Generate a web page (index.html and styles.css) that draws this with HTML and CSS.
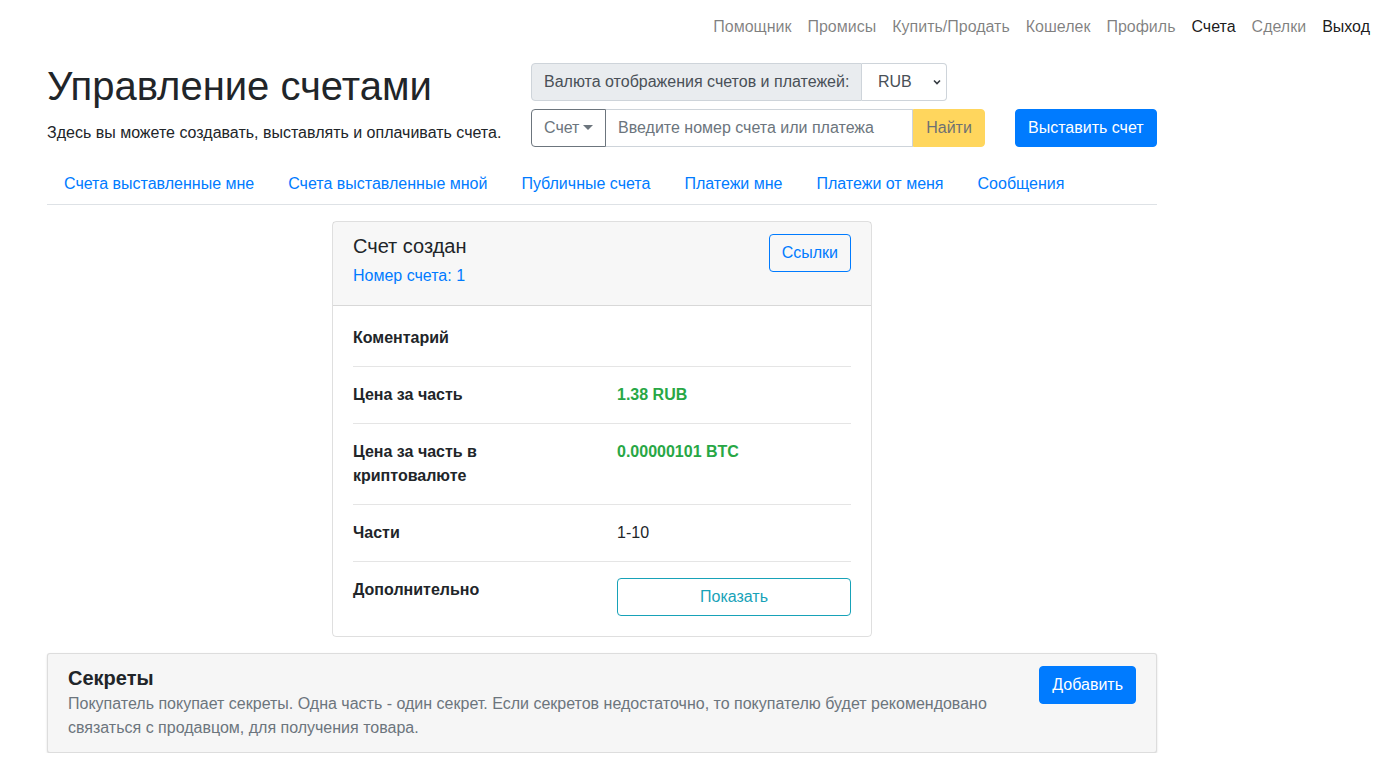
FILE: index.html
```html
<!DOCTYPE html>
<html lang="ru">
<head>
<meta charset="utf-8">
<title>Управление счетами</title>
<link rel="stylesheet" href="styles.css">
</head>
<body>
<nav class="topnav">
  <a class="nav-item" href="#">Помощник</a>
  <a class="nav-item" href="#">Промисы</a>
  <a class="nav-item" href="#">Купить/Продать</a>
  <a class="nav-item" href="#">Кошелек</a>
  <a class="nav-item" href="#">Профиль</a>
  <a class="nav-item active" href="#">Счета</a>
  <a class="nav-item" href="#">Сделки</a>
  <a class="nav-item active" href="#">Выход</a>
</nav>

<main class="container">
  <header class="page-head">
    <div class="head-left">
      <h1 class="title">Управление счетами</h1>
      <p class="lead">Здесь вы можете создавать, выставлять и оплачивать счета.</p>
    </div>
    <div class="head-right">
      <div class="input-group">
        <span class="ig-text">Валюта отображения счетов и платежей:</span>
        <div class="fake-select">
          <span>RUB</span>
          <svg class="chev" width="8" height="8" viewBox="0 0 8 8"><path d="M1 2.5 L4 5.5 L7 2.5" fill="none" stroke="#343a40" stroke-width="1.6"/></svg>
        </div>
      </div>
      <div class="search-row">
        <div class="input-group">
          <button class="btn btn-outline-secondary dd">Счет<span class="caret"></span></button>
          <input class="form-control" type="text" placeholder="Введите номер счета или платежа">
          <button class="btn btn-warning disabled">Найти</button>
        </div>
        <button class="btn btn-primary">Выставить счет</button>
      </div>
    </div>
  </header>

  <ul class="tabs">
    <li><a href="#">Счета выставленные мне</a></li>
    <li><a href="#">Счета выставленные мной</a></li>
    <li><a href="#">Публичные счета</a></li>
    <li><a href="#">Платежи мне</a></li>
    <li><a href="#">Платежи от меня</a></li>
    <li><a href="#">Сообщения</a></li>
  </ul>

  <section class="card">
    <div class="card-header">
      <div>
        <h5 class="card-title">Счет создан</h5>
        <a class="card-num" href="#">Номер счета: 1</a>
      </div>
      <button class="btn btn-outline-primary">Ссылки</button>
    </div>
    <div class="card-body">
      <div class="row"><div class="label">Коментарий</div><div class="value"></div></div>
      <hr>
      <div class="row"><div class="label">Цена за часть</div><div class="value green">1.38 RUB</div></div>
      <hr>
      <div class="row"><div class="label">Цена за часть в криптовалюте</div><div class="value green">0.00000101 BTC</div></div>
      <hr>
      <div class="row"><div class="label">Части</div><div class="value">1-10</div></div>
      <hr>
      <div class="row"><div class="label">Дополнительно</div><div class="value"><button class="btn btn-outline-info wide">Показать</button></div></div>
    </div>
  </section>

  <section class="secrets">
    <div class="secrets-text">
      <h5 class="secrets-title">Секреты</h5>
      <p class="muted">Покупатель покупает секреты. Одна часть - один секрет. Если секретов недостаточно, то покупателю будет рекомендовано связаться с продавцом, для получения товара.</p>
    </div>
    <button class="btn btn-primary">Добавить</button>
  </section>
</main>
</body>
</html>
```

FILE: styles.css
```css
* { box-sizing: border-box; }
html, body { margin: 0; padding: 0; }
body {
  font-family: "Liberation Sans", Arial, sans-serif;
  font-size: 16px;
  line-height: 1.5;
  color: #212529;
  background: #fff;
}
a { text-decoration: none; }

.topnav {
  display: flex;
  justify-content: flex-end;
  padding: 15px 11px 0 0;
  height: 52px;
}
.nav-item {
  padding: 0 8px;
  color: rgba(0,0,0,.5);
  line-height: 24px;
}
.nav-item.active { color: rgba(0,0,0,.9); }

.container {
  width: 1110px;
  margin-left: 47px;
}

.page-head {
  display: flex;
  align-items: flex-start;
}
.head-left {
  width: 484px;
  padding-top: 10px;
}
.title {
  font-size: 40px;
  font-weight: 400;
  line-height: 1.2;
  margin: 0 0 11px;
}
.lead {
  margin: 0;
  font-size: 16px;
}
.head-right {
  flex: 1;
  padding-top: 11px;
  display: flex;
  flex-direction: column;
  gap: 8px;
}
.input-group {
  display: flex;
  height: 38px;
}
.ig-text {
  background: #e9ecef;
  border: 1px solid #ced4da;
  border-radius: 4px 0 0 4px;
  padding: 6px 12px;
  color: #495057;
  width: 331px;
  white-space: nowrap;
}
.fake-select {
  width: 85px;
  border: 1px solid #ced4da;
  border-left: none;
  border-radius: 0 4px 4px 0;
  padding: 6px 5px 6px 16px;
  color: #495057;
  display: flex;
  align-items: center;
  justify-content: space-between;
}
.chev { display: block; }

.search-row {
  display: flex;
  gap: 30px;
}
.search-row .input-group { width: 454px; }

.btn {
  font-family: inherit;
  font-size: 16px;
  line-height: 24px;
  padding: 6px 12px;
  border: 1px solid transparent;
  border-radius: 4px;
  background: transparent;
  cursor: pointer;
  white-space: nowrap;
}
.btn-primary { background: #007bff; border-color: #007bff; color: #fff; }
.btn-outline-primary { border-color: #007bff; color: #007bff; }
.btn-outline-secondary { border-color: #6c757d; color: #6c757d; }
.btn-outline-info { border-color: #17a2b8; color: #17a2b8; }
.btn-warning { background: #ffc107; border-color: #ffc107; color: #212529; }
.btn.disabled { opacity: .65; }

.dd {
  width: 75px;
  border-radius: 4px 0 0 4px;
  display: flex;
  align-items: center;
  padding-right: 10px;
}
.caret {
  display: inline-block;
  margin-left: 4px;
  border-top: 5px solid #6c757d;
  border-left: 5px solid transparent;
  border-right: 5px solid transparent;
  margin-top: -2px;
}
.form-control {
  flex: 1;
  min-width: 0;
  border: 1px solid #ced4da;
  border-left: none;
  padding: 6px 12px;
  font-family: inherit;
  font-size: 16px;
  color: #495057;
}
.form-control::placeholder { color: #6c757d; }
.btn-warning.disabled {
  border-radius: 0 4px 4px 0;
  width: 72px;
}

.tabs {
  list-style: none;
  margin: 17px 0 0;
  padding: 0;
  display: flex;
  border-bottom: 1px solid #dee2e6;
}
.tabs a {
  display: block;
  padding: 8px 17px 8px 17px;
  color: #007bff;
}

.card {
  width: 540px;
  margin: 16px auto 0;
  border: 1px solid rgba(0,0,0,.125);
  border-radius: 4px;
}
.card-header {
  background: rgba(0,0,0,.03);
  border-bottom: 1px solid rgba(0,0,0,.125);
  padding: 12px 20px 17px;
  display: flex;
  justify-content: space-between;
  align-items: flex-start;
}
.card-title {
  font-size: 20px;
  font-weight: 400;
  line-height: 24px;
  margin: 0 0 6px;
}
.card-num { color: #007bff; display: block; }
.card-body { padding: 20px 20px 20px; }
.row { display: flex; }
.label { width: 264px; padding-right: 30px; font-weight: 700; }
.value { flex: 1; }
.green { color: #28a745; font-weight: 700; }
.wide { width: 100%; }
hr {
  border: 0;
  border-top: 1px solid rgba(0,0,0,.1);
  margin: 16px 0;
}

.secrets {
  margin-top: 16px;
  background: #f6f6f6;
  border: 1px solid rgba(0,0,0,.1);
  border-radius: 3px;
  box-shadow: 0 1px 2px rgba(0,0,0,.15);
  padding: 12px 20px 12px 20px;
  display: flex;
  justify-content: space-between;
  align-items: flex-start;
  gap: 20px;
}
.secrets-title {
  font-size: 20px;
  font-weight: 700;
  line-height: 24px;
  margin: 0;
}
.muted { color: #6c757d; margin: 2px 0 0; }
```
